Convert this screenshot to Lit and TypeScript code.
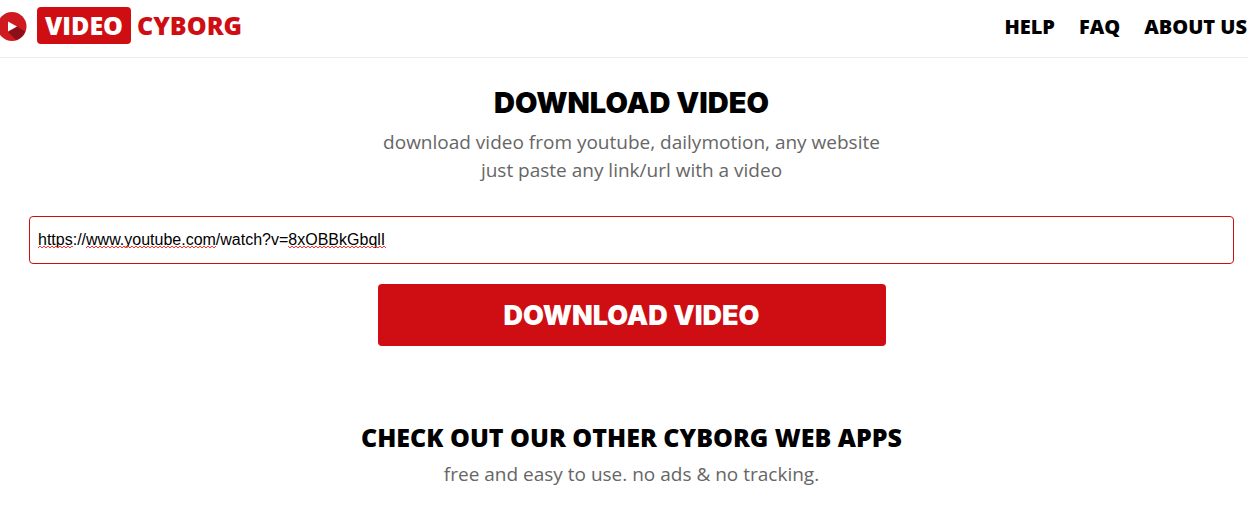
import { LitElement, html, css } from "lit";
import { customElement, state } from "lit/decorators.js";

@customElement("app-root")
export class AppRoot extends LitElement {
  static styles = css`
    :host { display: block; font-family: "Open Sans", "Noto Sans", sans-serif; color: #000; background: #fff; }
    * { box-sizing: border-box; }
    a { color: inherit; text-decoration: none; }
    h1, h2, p { margin: 0; }
    h2, .brand, nav { font-weight: 800; }
    header { display: flex; align-items: center; justify-content: space-between; height: 58px; padding-bottom: 6px; border-bottom: 1px solid #ececec; }
    .brand { display: flex; align-items: center; font-size: 25px; line-height: 37px; color: #cf0e13; }
    .logo { width: 27px; height: 30px; margin-right: 10px; }
    .tag { background: #cf0e13; color: #fff; border-radius: 4px; padding: 0 8px; margin-right: 6px; }
    nav { display: flex; gap: 24px; font-size: 20px; padding: 2px 1px 0 0; }
    main { display: flex; flex-direction: column; align-items: center; text-align: center; padding: 25px 14px 24px 29px; }
    h1 { font: 900 29px/40px Inter, "Open Sans", sans-serif; }
    p { font-size: 19px; line-height: 28px; color: #666; margin-top: 5px; }
    form { width: 100%; display: flex; flex-direction: column; align-items: center; gap: 20px; margin-top: 32px; }
    .field { position: relative; width: 100%; height: 48px; }
    .url { width: 100%; height: 100%; border: 1px solid #cf0e13; border-radius: 4px; padding: 0 8px; font: 16px "Liberation Sans", Arial, sans-serif; color: #000; background: #fff; outline: none; }
    .squiggles { position: absolute; left: 9px; top: 29px; width: 348px; height: 4px; pointer-events: none; }
    .go { width: 508px; max-width: 100%; height: 62px; border: 0; border-radius: 4px; background: #cf0e13; color: #fff; font: 900 27px Inter, "Liberation Sans", sans-serif; }
    h2 { font-size: 25px; line-height: 36px; margin-top: 73px; }
  `;
  @state() private url = "https://www.youtube.com/watch?v=8xOBBkGbqlI";
  render() {
    return html`
      <header>
        <a class="brand" href="#">
          <svg class="logo" viewBox="0 0 27 30" aria-hidden="true">
            <circle cx="12" cy="15.5" r="14.500" fill="#cf1a20"/>
            <path d="M17 15.500l8 5A14.500 14.500 0 0 1 16 29L8 21z" fill="#8c1018"/>
            <path d="M8 10.500v10l9-5z" fill="#fff"/>
          </svg>
          <span class="tag">VIDEO</span><span>CYBORG</span>
        </a>
        <nav><a href="#help">HELP</a><a href="#faq">FAQ</a><a href="#about">ABOUT US</a></nav>
      </header>
      <main>
        <h1>DOWNLOAD VIDEO</h1>
        <p>download video from youtube, dailymotion, any website<br />just paste any link/url with a video</p>
        <form @submit=${(e: Event) => e.preventDefault()}>
          <div class="field">
            <input class="url" type="text" aria-label="Video link" spellcheck="false" .value=${this.url} />
            <svg class="squiggles" viewBox="0 0 348 4" aria-hidden="true">
              <defs><pattern id="wave" width="4" height="4" patternUnits="userSpaceOnUse"><path d="M-1 2L0 3L2 1L4 3L5 2" fill="none" stroke="#f33" stroke-width="1"/></pattern></defs>
              <path d="M0 0h35v4h-35zM48 0h130v4h-130zM250 0h98v4h-98z" fill="url(#wave)"/>
            </svg>
          </div>
          <button class="go" type="submit">DOWNLOAD VIDEO</button>
        </form>
        <h2>CHECK OUT OUR OTHER CYBORG WEB APPS</h2>
        <p>free and easy to use. no ads &amp; no tracking.</p>
      </main>`;
  }
}
